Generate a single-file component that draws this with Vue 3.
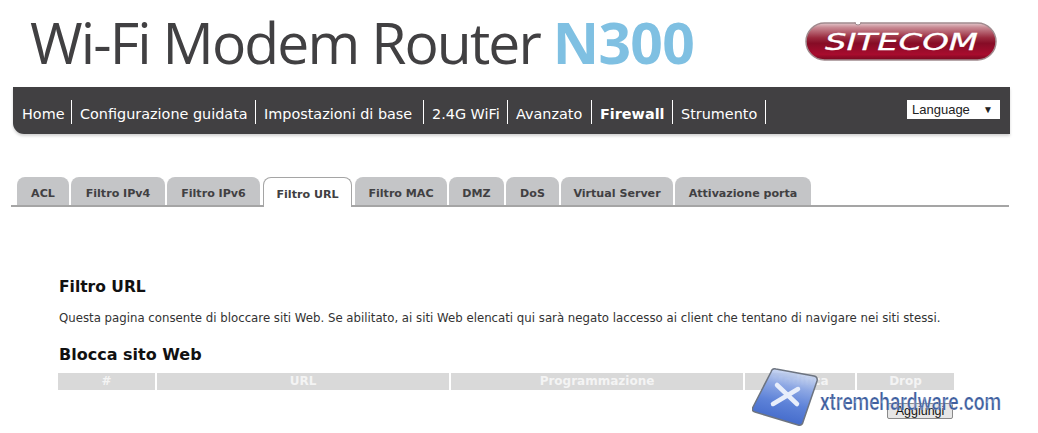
<template>
  <div class="page">
    <header class="top">
      <h1 class="title">Wi-Fi Modem Router <span class="accent">N300</span></h1>
      <svg class="logo" width="196" height="42" viewBox="0 0 196 42">
        <defs>
          <linearGradient id="pill" x1="0" y1="0" x2="0" y2="1">
            <stop offset="0" stop-color="#e4c8cc" />
            <stop offset="0.12" stop-color="#c88a94" />
            <stop offset="0.4" stop-color="#9a2a3e" />
            <stop offset="0.55" stop-color="#860c26" />
            <stop offset="0.85" stop-color="#a80c2e" />
            <stop offset="1" stop-color="#74091f" />
          </linearGradient>
        </defs>
        <rect x="4" y="1" width="190" height="37" rx="18.5" fill="url(#pill)" stroke="#a08a8e" stroke-width="1.5" />
        <circle cx="56" cy="0" r="3" fill="#fff" stroke="#a08a8e" />
        <text x="23" y="28" class="logo-text" textLength="153" lengthAdjust="spacingAndGlyphs">SITECOM</text>
      </svg>
    </header>

    <nav class="nav">
      <ul class="menu">
        <li v-for="item in menu" :key="item.name" :class="{ current: item.name === 'Firewall' }" :style="{ width: item.width + 'px' }">{{ item.name }}</li>
      </ul>
      <div class="lang">Language<span class="arrow">▼</span></div>
    </nav>

    <div class="tabs">
      <div v-for="tab in tabs" :key="tab.name" class="tab" :class="{ active: tab.name === 'Filtro URL' }" :style="{ width: tab.width + 'px' }">{{ tab.name }}</div>
    </div>

    <main class="content">
      <h2>Filtro URL</h2>
      <p>Questa pagina consente di bloccare siti Web. Se abilitato, ai siti Web elencati qui sarà negato laccesso ai client che tentano di navigare nei siti stessi.</p>
      <h2 class="second">Blocca sito Web</h2>
      <div class="table">
        <div v-for="col in cols" :key="col" class="th">{{ col }}</div>
      </div>
      <div class="actions"><button class="add">Aggiungi</button></div>
    </main>

    <!-- watermark sopra la pagina -->
    <svg class="mark" width="286" height="67" viewBox="0 0 286 67">
      <defs>
        <linearGradient id="tile" x1="0.6" y1="0" x2="0.35" y2="1">
          <stop offset="0" stop-color="#c8d6f2" stop-opacity="0.75" />
          <stop offset="0.3" stop-color="#8ea8e4" />
          <stop offset="0.6" stop-color="#5d82d8" />
          <stop offset="1" stop-color="#3f66c8" />
        </linearGradient>
      </defs>
      <path d="M19 6 Q20 2 24 3 L62 10 Q66 11 65 15 L51 56 Q50 60 46 59 L3 46 Q-1 45 1 41 Z" fill="url(#tile)" stroke="#6d7480" stroke-width="1.5" />
      <path d="M25 19 L45 38 M46 23 L21 38" stroke="#e8eefb" stroke-width="4.5" stroke-linecap="round" fill="none" />
      <text x="68" y="44" class="mark-text" textLength="181" lengthAdjust="spacingAndGlyphs">xtremehardware.com</text>
    </svg>
  </div>
</template>

<script setup>
const menu = [
  { name: 'Home', width: 59 },
  { name: 'Configurazione guidata', width: 184 },
  { name: 'Impostazioni di base', width: 168 },
  { name: '2.4G WiFi', width: 84 },
  { name: 'Avanzato', width: 84 },
  { name: 'Firewall', width: 81 },
  { name: 'Strumento', width: 93 }
]

const tabs = [
  { name: 'ACL', width: 52 },
  { name: 'Filtro IPv4', width: 94 },
  { name: 'Filtro IPv6', width: 93 },
  { name: 'Filtro URL', width: 89 },
  { name: 'Filtro MAC', width: 92 },
  { name: 'DMZ', width: 55 },
  { name: 'DoS', width: 53 },
  { name: 'Virtual Server', width: 112 },
  { name: 'Attivazione porta', width: 136 }
]

const cols = ['#', 'URL', 'Programmazione', 'Modifica', 'Drop']
</script>

<style>
html, body {
  background: #fff;
}
</style>

<style scoped>
.page {
  position: relative;
  width: 1038px;
  height: 433px;
  overflow: hidden;
  font-family: "DejaVu Sans", Verdana, sans-serif;
}

.top {
  display: flex;
  justify-content: space-between;
  height: 87px;
  padding: 0 40px 0 30px;
  box-sizing: border-box;
}

.title {
  margin: 0;
  font-family: "Open Sans", "Noto Sans", sans-serif;
  font-size: 57px;
  font-weight: 400;
  line-height: 85px;
  letter-spacing: -1.9px;
  color: #414042;
  white-space: nowrap;
}

.accent {
  font-weight: 700;
  letter-spacing: -0.7px;
  color: #7fc0e2;
}

.logo {
  margin-top: 22px;
}

.logo-text {
  font-family: "DejaVu Sans", sans-serif;
  font-size: 23px;
  font-style: italic;
  fill: #fff;
  stroke: #fff;
  stroke-width: 0.3px;
}

.nav {
  display: flex;
  justify-content: space-between;
  width: 997px;
  height: 47px;
  margin-left: 13px;
  padding-right: 10px;
  box-sizing: border-box;
  background: #414042;
  border-bottom-left-radius: 11px;
  box-shadow: 0 2px 3px rgba(0, 0, 0, 0.18);
}

.menu {
  display: flex;
  margin: 13px 0 0;
  padding: 0;
  list-style: none;
}

.menu li {
  height: 24px;
  padding-left: 8px;
  box-sizing: border-box;
  border-right: 1px solid #fff;
  font-size: 14.4px;
  line-height: 29px;
  white-space: nowrap;
  color: #fff;
}

.menu li:first-child {
  padding-left: 9px;
}

.menu li.current {
  font-weight: 700;
}

.lang {
  display: flex;
  justify-content: space-between;
  width: 93px;
  height: 19px;
  margin-top: 13px;
  padding: 0 7px 0 5px;
  box-sizing: border-box;
  background: #fff;
  font-family: "Liberation Sans", sans-serif;
  font-size: 13px;
  line-height: 19px;
  color: #222;
}

.arrow {
  font-size: 10px;
}

.tabs {
  display: flex;
  gap: 2px;
  width: 998px;
  height: 30px;
  margin: 43px 0 0 11px;
  padding-left: 6px;
  box-sizing: border-box;
  border-bottom: 2px solid #a5a5a5;
}

.tab {
  height: 28px;
  box-sizing: border-box;
  border-radius: 8px 8px 0 0;
  background: #c4c5c7;
  font-size: 11.1px;
  font-weight: 700;
  line-height: 34px;
  text-align: center;
  white-space: nowrap;
  color: #414042;
}

.tab.active {
  height: 30px;
  margin: 0 1px;
  border: 1px solid #a5a5a5;
  border-bottom: 0;
  background: #fff;
  line-height: 33px;
}

.content {
  padding: 71px 84px 0 59px;
  color: #111;
}

h2 {
  margin: 0;
  font-size: 15.5px;
  font-weight: 700;
  line-height: 18px;
}

p {
  margin: 15px 0 0;
  font-size: 11.75px;
  line-height: 15px;
  white-space: nowrap;
  color: #333;
}

h2.second {
  margin-top: 20px;
  font-size: 16px;
}

.table {
  display: grid;
  grid-template-columns: 97px 292px 292px 110px 97px;
  gap: 2px;
  margin: 9px 0 0 -1px;
  width: 896px;
}

.th {
  height: 17px;
  background: #d9d9d9;
  font-size: 12px;
  font-weight: 700;
  line-height: 17px;
  text-align: center;
  color: #f4f4f4;
}

.actions {
  display: flex;
  justify-content: flex-end;
  width: 894px;
  margin-top: 13px;
}

.add {
  width: 66px;
  height: 16px;
  padding: 0;
  border: 1px solid #8a8a8a;
  border-radius: 2px;
  background: #e6e6e6;
  font-family: "Liberation Sans", sans-serif;
  font-size: 12.5px;
  line-height: 14px;
  color: #111;
}

.mark {
  position: absolute;
  left: 752px;
  top: 366px;
}

.mark-text {
  font-family: "Roboto", "Liberation Sans", sans-serif;
  font-size: 24px;
  font-weight: 500;
  fill: #3f5f9f;
  stroke: #fff;
  stroke-width: 0.2px;
}
</style>
